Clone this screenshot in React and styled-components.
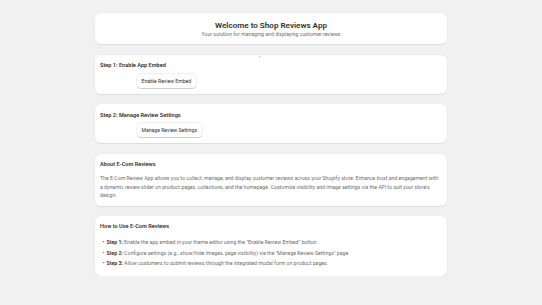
import styled, { createGlobalStyle } from "styled-components";

const GlobalStyle = createGlobalStyle`
  html, body {
    margin: 0;
    padding: 0;
    background: #f1f1f1;
    font-family: Roboto, Inter, "Noto Sans", sans-serif;
    color: #303030;
  }
`;

export default function App() {
  return (
    <>
      <GlobalStyle />
      <Page>
        <Card className="hero">
          <Titulo>Welcome to Shop Reviews App</Titulo>
          <Subtitulo>Your solution for managing and displaying customer reviews</Subtitulo>
        </Card>

        <Card className="accion">
          <Punto />
          <Encabezado>Step 1: Enable App Embed</Encabezado>
          <FilaBoton>
            <Boton>Enable Review Embed</Boton>
          </FilaBoton>
        </Card>

        <Card className="accion">
          <Encabezado>Step 2: Manage Review Settings</Encabezado>
          <FilaBoton>
            <Boton>Manage Review Settings</Boton>
          </FilaBoton>
        </Card>

        <Card>
          <Encabezado>About E-Com Reviews</Encabezado>
          <Parrafo>
            The E-Com Review App allows you to collect, manage, and display
            customer reviews across your Shopify store. Enhance trust and
            engagement with a dynamic review slider on product pages,
            collections, and the homepage. Customize visibility and image
            settings via the API to suit your store's design.
          </Parrafo>
        </Card>

        <Card className="lista">
          <Encabezado>How to Use E-Com Reviews</Encabezado>
          <Lista>
            <li>
              <b>Step 1:</b> Enable the app embed in your theme editor using the
              "Enable Review Embed" button.
            </li>
            <li>
              <b>Step 2:</b> Configure settings (e.g., show/hide images, page
              visibility) via the "Manage Review Settings" page.
            </li>
            <li>
              <b>Step 3:</b> Allow customers to submit reviews through the
              integrated modal form on product pages.
            </li>
          </Lista>
        </Card>
      </Page>
    </>
  );
}

const Page = styled.div`
  width: 352px;
  margin: 0 auto;
  padding-top: 13px;
  display: flex;
  flex-direction: column;
  gap: 10.5px;
`;

const Card = styled.div`
  position: relative;
  background: #ffffff;
  border-radius: 6px;
  box-shadow: 0 1px 1px rgba(0, 0, 0, 0.07), 0 0 0 0.5px rgba(0, 0, 0, 0.03);
  padding: 6px 5px 6px;
  &.hero {
    padding: 5.5px 5px 6.5px;
    text-align: center;
  }
  &.accion {
    padding: 6.5px 5px 6px;
  }
  &.lista {
    padding: 6px 5px 7.5px;
  }
`;

const Titulo = styled.h1`
  margin: 0;
  font-size: 8.1px;
  line-height: 12px;
  font-weight: 600;
  color: #303030;
`;

const Subtitulo = styled.p`
  margin: 0;
  font-size: 5.2px;
  line-height: 7px;
  color: #6d6d6d;
`;

const Encabezado = styled.h2`
  margin: 0;
  font-size: 5.6px;
  line-height: 9px;
  font-weight: 600;
  color: #303030;
`;

const FilaBoton = styled.div`
  display: flex;
  padding-left: 37px;
  margin-top: 3.5px;
`;

const Boton = styled.button`
  font-family: inherit;
  font-size: 5.1px;
  line-height: 8px;
  font-weight: 400;
  color: #303030;
  background: #ffffff;
  border: none;
  border-radius: 4px;
  padding: 3px 4.5px;
  box-shadow: 0 0 0 0.5px rgba(0, 0, 0, 0.12), 0 1px 0 rgba(0, 0, 0, 0.14);
`;

const Parrafo = styled.p`
  margin: 5.75px 0 0;
  font-size: 5.2px;
  line-height: 8.5px;
  color: #6d6d6d;
`;

const Lista = styled.ul`
  margin: 6px 0 0;
  padding-left: 7px;
  list-style: none;
  font-size: 5.2px;
  line-height: 10.5px;
  color: #6d6d6d;
  li::before {
    content: "•";
    display: inline-block;
    width: 4px;
    margin-left: -4.5px;
    color: #303030;
  }
  b {
    color: #303030;
    font-weight: 600;
  }
`;

const Punto = styled.span`
  position: absolute;
  top: 1px;
  left: 164px;
  width: 1px;
  height: 1px;
  background: #b5b5b5;
`;
